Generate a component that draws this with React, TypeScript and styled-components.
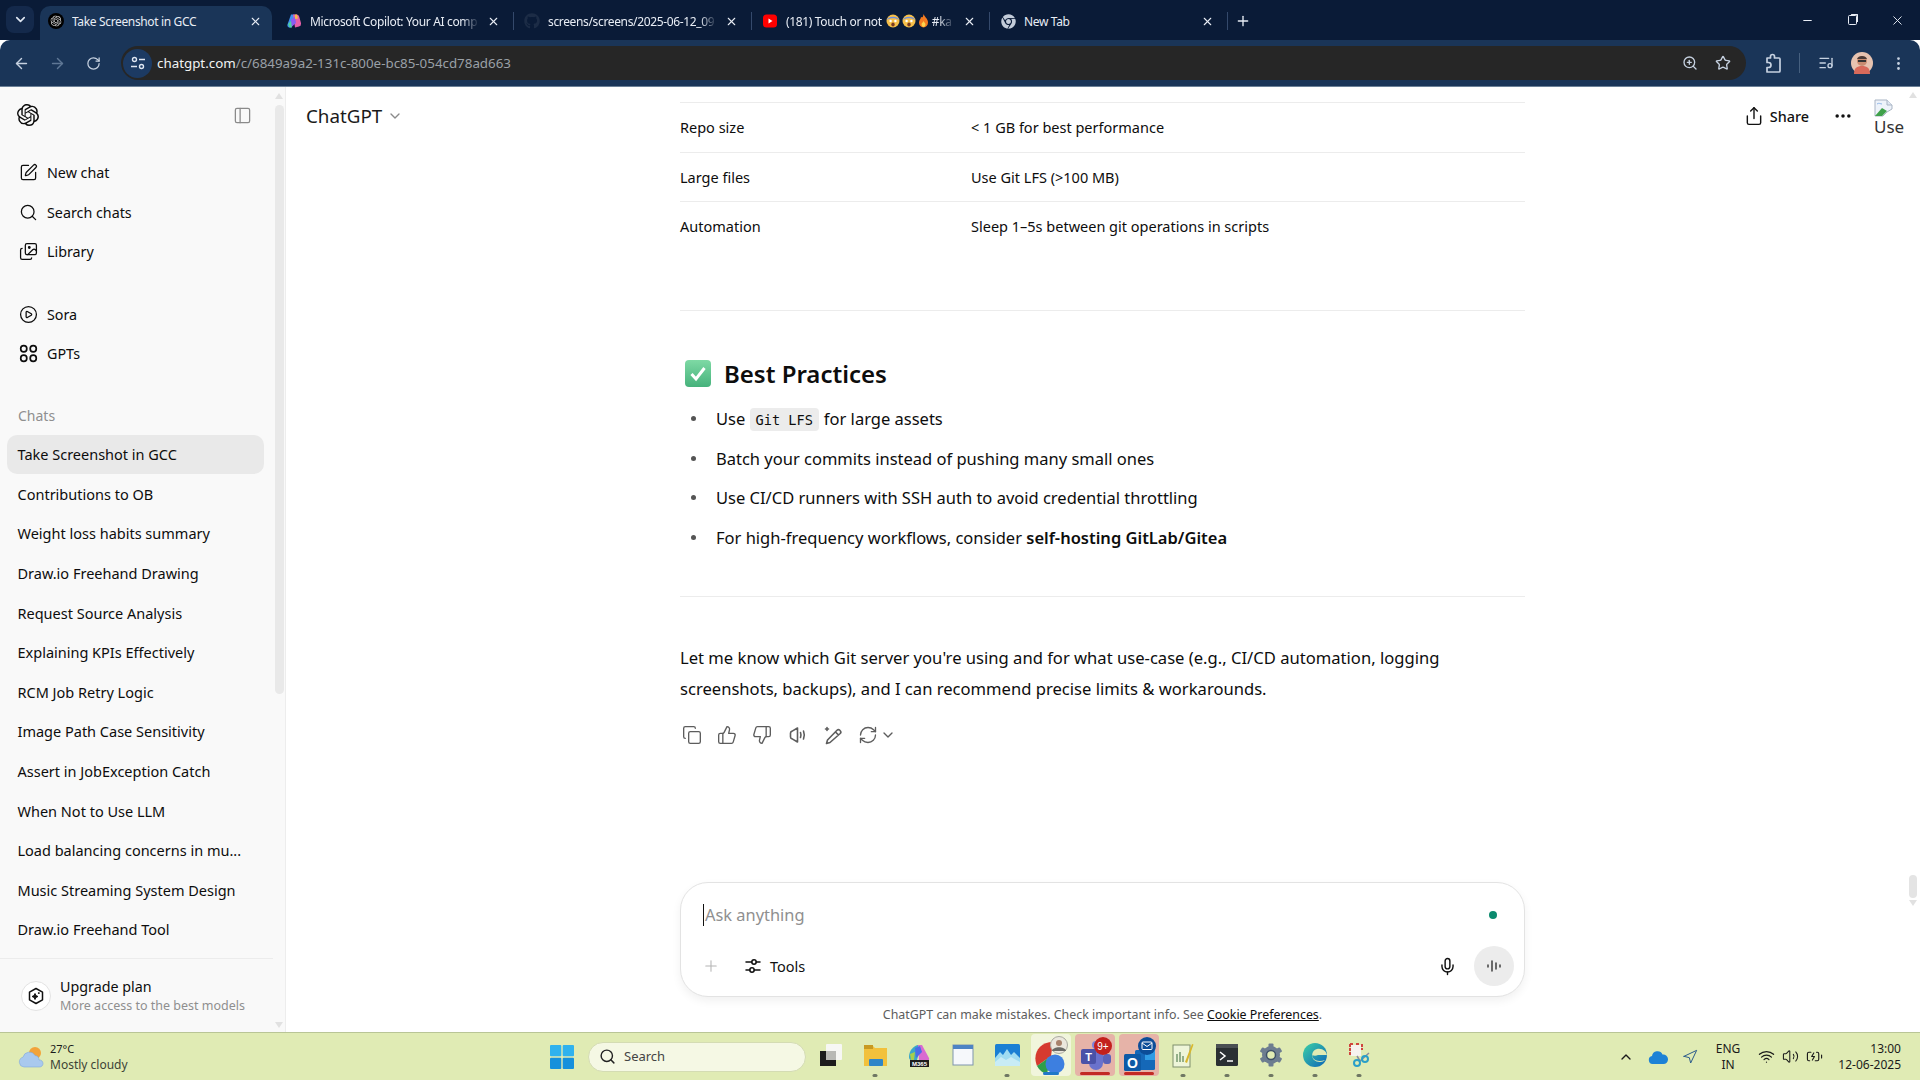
import React from "react";
import styled, { createGlobalStyle } from "styled-components";
import {
  SquarePen, Search, Images, CirclePlay, PanelLeft, Copy, ThumbsUp, ThumbsDown, RefreshCw, ChevronDown, Plus,
  Mic, Share, MoreHorizontal, ArrowLeft, ArrowRight, RotateCw, ZoomIn, Star, ListMusic, MoreVertical,
  Minus, X, ChevronUp, Wifi, Volume2, Navigation, BatteryCharging,
} from "lucide-react";
import { SiOpenai } from "react-icons/si";
import { FaGithub, FaChrome } from "react-icons/fa";

const SANS = `"Noto Sans", "Open Sans", sans-serif`;

const Global = createGlobalStyle`
  html, body { margin: 0; padding: 0; width: 1920px; height: 1080px; overflow: hidden; background: #fff; }
  * { box-sizing: border-box; }
  body { font-family: ${SANS}; color: #0d0d0d; }
`;

const Screen = styled.div`
  width: 1920px; height: 1080px; display: grid; grid-template-rows: 40px 47px 945px 48px; overflow: hidden;
`;

/* ---------- browser chrome ---------- */
const TabStrip = styled.div`
  display: flex; align-items: flex-end; background: #0a1b37; color: #e8edf5;
`;
const TabSearch = styled.div`
  width: 28px; height: 27px; margin: 0 6px 7px 6px; background: #14294b; border-radius: 8px;
  display: flex; align-items: center; justify-content: center; color: #dfe6f2;
`;
const Tab = styled.div<{ $active?: boolean }>`
  width: 232px; height: 34px; display: flex; align-items: center; gap: 8px; padding: 0 10px 4px 8px;
  border-radius: 10px 10px 0 0; background: ${(p) => (p.$active ? "#1a3558" : "transparent")};
  font-size: 12px; white-space: nowrap;
`;
const Fav = styled.span`
  width: 16px; height: 16px; flex: none; display: flex; align-items: center; justify-content: center;
`;
const TabTitle = styled.span`
  flex: 1; min-width: 0; overflow: hidden; display: flex; align-items: center; letter-spacing: -0.35px;
`;
const FadeTitle = styled(TabTitle)`
  -webkit-mask-image: linear-gradient(90deg, #000 90%, transparent);
  mask-image: linear-gradient(90deg, #000 90%, transparent);
`;
const TabEmoji = styled.span`
  display: flex; align-items: center; gap: 2px; margin: 0 3px 0 4px; flex: none;
`;
const TabClose = styled(X)`
  flex: none; width: 13px; height: 13px; stroke-width: 2;
`;
const TabGap = styled.span<{ $line?: boolean }>`
  width: 6px; height: 34px; padding-bottom: 4px; display: flex; justify-content: center; align-items: center;
  &::after { content: ""; width: 1px; height: 18px; background: ${(p) => (p.$line ? "#34496b" : "transparent")}; }
`;
const NewTab = styled.div`
  width: 26px; height: 34px; padding-bottom: 4px; display: flex; align-items: center; justify-content: center;
`;
const WinControls = styled.div`
  margin-left: auto; display: flex; height: 40px; align-self: flex-start;
`;
const WinBtn = styled.div`
  width: 45px; height: 40px; display: flex; align-items: center; justify-content: center; color: #e8edf5;
`;
const RestoreIcon = styled.span`
  width: 9px; height: 10px; border: 1px solid #e8edf5; border-radius: 1.5px; box-shadow: 2px -2px 0 -1px #e8edf5;
`;
const Toolbar = styled.div`
  display: flex; align-items: center; padding-left: 3px; background: #1a3558; border-bottom: 1px solid #6b8097;
  border-radius: 10px 10px 0 0;
  color: #c6d1e0;
`;
const ToolBtn = styled.div<{ $dim?: boolean }>`
  width: 36px; height: 34px; flex: none; display: flex; align-items: center; justify-content: center;
  color: ${(p) => (p.$dim ? "#5f7795" : "#c6d1e0")};
`;
const Omnibox = styled.div`
  width: 1625px; height: 34px; margin-left: 10px; margin-right: 9px; background: #262626; border-radius: 17px;
  display: flex; align-items: center; flex: none; padding-right: 7px;
`;
const SiteBadge = styled.div`
  width: 29px; height: 29px; margin-left: 2px; border-radius: 50%; background: #1c3a63;
  display: flex; align-items: center; justify-content: center; color: #dfe6f2;
`;
const Url = styled.div`
  margin-left: 5px; flex: 1; font-size: 13.35px; color: #9aa0a6; white-space: nowrap;
  & b { font-weight: 400; color: #f1f3f4; }
`;
const PillIcon = styled.div`
  width: 33px; display: flex; justify-content: center; color: #c6d1e0;
`;
const ToolSep = styled.span`
  width: 17px; flex: none; display: flex; justify-content: center;
  &::after { content: ""; width: 1px; height: 20px; background: #46607f; }
`;

/* ---------- body ---------- */
const Body = styled.div`
  display: flex; min-height: 0; background: #fff;
`;
const Sidebar = styled.aside`
  width: 286px; flex: none; display: flex; background: #f9f9f9; border-right: 1px solid #ededed;
`;
const SideMain = styled.div`
  width: 273px; flex: none; display: flex; flex-direction: column; min-height: 0;
`;
const SideHead = styled.div`
  height: 56px; flex: none; display: flex; align-items: center; justify-content: space-between; padding: 0 21px 0 17px;
`;
const NavGroup = styled.div<{ $top: number }>`
  margin-top: ${(p) => p.$top}px; flex: none;
`;
const NavItem = styled.div`
  height: 39.5px; display: flex; align-items: center; gap: 9px; padding-left: 19px; font-size: 14.3px; color: #0d0d0d;
  & svg { width: 19px; height: 19px; flex: none; stroke-width: 1.6; }
`;
const SectionLabel = styled.div`
  height: 40px; margin-top: 21px; padding: 1px 0 0 18px; flex: none; display: flex; align-items: center; font-size: 14px; color: #8f8f8f;
`;
const ChatList = styled.div`
  flex: 1; min-height: 0; overflow: hidden; width: 257px; margin-left: 7px;
`;
const ChatRow = styled.div<{ $active?: boolean }>`
  height: 39.6px; display: flex; align-items: center; padding-left: 10.5px; font-size: 14.5px; white-space: nowrap;
  border-radius: 10px; background: ${(p) => (p.$active ? "#e9e9e9" : "transparent")};
`;
const UpgradeBox = styled.div`
  height: 74px; flex: none; display: flex; align-items: center; gap: 9px; padding-left: 21px; border-top: 1px solid #ececec;
`;
const UpgradeIcon = styled.div`
  width: 30px; height: 30px; border-radius: 50%; border: 1px solid #e3e3e3; flex: none;
  display: flex; align-items: center; justify-content: center; background: #fff;
`;
const UpgradeText = styled.div`
  display: flex; flex-direction: column; gap: 1px; white-space: nowrap;
  & strong { font-weight: 400; font-size: 14.3px; line-height: 19px; }
  & span { font-size: 12.5px; line-height: 17px; color: #8f8f8f; }
`;
const SideScroll = styled.div`
  flex: 1; display: flex; flex-direction: column; align-items: center; padding: 6px 0 4px;
`;
const ArrowUp = styled.span`
  width: 0; height: 0; border: 4.5px solid transparent; border-top: 0; border-bottom: 6px solid #e1e1e1; flex: none;
`;
const ArrowDown = styled.span`
  width: 0; height: 0; border: 4.5px solid transparent; border-bottom: 0; border-top: 6px solid #e1e1e1; flex: none;
`;
const SideThumb = styled.span`
  width: 9px; height: 589px; margin-top: 6px; border-radius: 5px; background: #e9e9e9; flex: none;
`;
const ScrollFill = styled.span`
  flex: 1;
`;

const Main = styled.main`
  flex: 1; display: grid; grid-template-columns: 394px 845px 1fr; min-width: 0;
`;
const LeftCol = styled.div`
  padding-left: 20px;
`;
const ModelPicker = styled.div`
  height: 58px; display: flex; align-items: center; gap: 5px; font-size: 18.8px; color: #1a1a1a;
  & svg { color: #8a8a8a; }
`;
const Thread = styled.div`
  display: flex; flex-direction: column; padding-top: 15px; min-height: 0;
`;
const TableRow = styled.div`
  height: 49.5px; display: flex; align-items: center; font-size: 14.5px; border-top: 1px solid #ececec; flex: none;
`;
const KeyCell = styled.span`
  width: 291px; flex: none;
`;
const Rule = styled.hr<{ $top: number }>`
  border: 0; height: 1px; background: #ececec; margin: ${(p) => p.$top}px 0 0; flex: none;
`;
const Heading = styled.h3`
  margin: 47px 0 0 5px; height: 32px; display: flex; align-items: center; gap: 13px; font-size: 24px; font-weight: 600; flex: none;
`;
const Bullets = styled.ul`
  list-style: none; margin: 9px 0 0; padding: 0; flex: none;
`;
const Bullet = styled.li`
  height: 39.7px; display: flex; align-items: center; white-space: pre; font-size: 16.5px; padding-left: 36px; position: relative;
  &::before { content: ""; position: absolute; left: 11px; top: 17.5px; width: 5px; height: 5px; border-radius: 50%; background: #555; }
  & b { font-weight: 600; }
`;
const Code = styled.code`
  font-family: "DejaVu Sans Mono", "Liberation Mono", monospace; font-size: 13.6px; background: #ececec; border-radius: 4px;
  padding: 3px 6px 2px; margin: 2px 5px 0 0; line-height: 18px;
`;
const Para = styled.p`
  margin: 45px 0 0; font-size: 16.6px; line-height: 31px; flex: none;
`;
const Actions = styled.div`
  margin: 15px 0 0 -6px; height: 32px; display: flex; align-items: center; color: #5d5d5d; flex: none;
`;
const ActionBtn = styled.span`
  width: 35.3px; height: 32px; display: flex; align-items: center; justify-content: center; flex: none;
  & svg { width: 20px; height: 20px; stroke-width: 1.6; }
`;
const RegenChevron = styled(ChevronDown)`
  width: 16px; height: 16px; margin-left: -6px; stroke-width: 2;
`;
const Composer = styled.div`
  margin-top: auto; height: 115px; flex: none; border: 1px solid #e3e3e3; border-radius: 28px; background: #fff;
  box-shadow: 0 4px 10px rgba(0, 0, 0, 0.06); display: flex; flex-direction: column;
`;
const InputLine = styled.div`
  height: 63px; display: flex; align-items: center; justify-content: space-between; padding: 0 27px 0 22px;
`;
const Placeholder = styled.div`
  border-left: 1px solid #111; height: 22px; display: flex; align-items: center; font-size: 16.4px; color: #8f8f8f; padding-left: 1px;
`;
const Dot = styled.span`
  width: 8px; height: 8px; border-radius: 50%; background: #0b8a6e;
`;
const ComposerBar = styled.div`
  height: 40px; display: flex; align-items: center; padding: 0 10px 0 21px; color: #111;
`;
const PlusIcon = styled(Plus)`
  color: #b4b4b4; width: 18px; height: 18px; stroke-width: 1.4;
`;
const ToolsBtn = styled.div`
  margin-left: 24px; display: flex; align-items: center; gap: 8px; font-size: 14.5px;
`;
const MicIcon = styled(Mic)`
  margin-left: auto; margin-right: 17px; width: 19px; height: 19px; stroke-width: 1.8;
`;
const VoiceBtn = styled.div`
  width: 40px; height: 40px; border-radius: 50%; background: #ececec; display: flex; align-items: center; justify-content: center;
`;
const Disclaimer = styled.div`
  height: 35px; flex: none; display: flex; align-items: center; justify-content: center; font-size: 12.4px; color: #5d5d5d; white-space: pre;
  & u { color: #0d0d0d; }
`;
const RightCol = styled.div`
  display: flex; min-width: 0;
`;
const HeaderActions = styled.div`
  flex: 1; height: 58px; display: flex; align-items: center; justify-content: flex-end; color: #111;
`;
const ShareBtn = styled.div`
  display: flex; align-items: center; gap: 6px; font-size: 14.4px; font-weight: 500; margin-right: 24px;
`;
const Dots = styled(MoreHorizontal)`
  width: 20px; height: 20px; margin-right: 21px; stroke-width: 2.2;
`;
const BrokenAvatar = styled.div`
  width: 31px; margin-top: 4px; display: flex; flex-direction: column; font-size: 17px; line-height: 20px; color: #333;
`;
const AvatarAlt = styled.span`
  white-space: nowrap;
`;
const PageScroll = styled.div`
  width: 15px; flex: none; display: flex; flex-direction: column; align-items: center; padding: 5px 0 126px;
`;
const PageThumb = styled.span`
  width: 8px; height: 23px; border-radius: 4px; background: #e4e4e4; margin-bottom: 2px; flex: none;
`;

/* ---------- taskbar ---------- */
const Taskbar = styled.footer`
  display: grid; grid-template-columns: 550px auto 1fr; background: #e0ebb4; border-top: 1px solid #b9c596;
  align-items: center; color: #1b1b1b;
`;
const Weather = styled.div`
  display: flex; align-items: center; gap: 6px; padding-left: 18px;
`;
const WeatherText = styled.div`
  display: flex; flex-direction: column; font-size: 11px; line-height: 16px; white-space: nowrap;
  & span { font-size: 12px; color: #3d4436; }
`;
const CenterGroup = styled.div`
  display: flex; align-items: center;
`;
const StartBtn = styled.div`
  width: 24px; height: 24px; margin-right: 14px; flex: none;
`;
const SearchPill = styled.div`
  width: 218px; height: 30px; margin-right: 3px; border-radius: 15px; background: #f5f8e4; border: 1px solid #d4dcb3;
  display: flex; align-items: center; gap: 8px; padding: 0 0 1px 10px; font-size: 13px; color: #444; flex: none;
`;
const AppCell = styled.div`
  width: 44px; height: 47px; flex: none; display: flex; align-items: flex-start; justify-content: center; padding-top: 1px;
`;
const AppBox = styled.div<{ $tone?: "light" | "alert" }>`
  width: 40px; height: 42px; position: relative; display: flex; align-items: center; justify-content: center; border-radius: 4px;
  background: ${(p) => (p.$tone === "light" ? "#f1f5dc" : p.$tone === "alert" ? "#e6b3a8" : "transparent")};
`;
const Indicator = styled.span<{ $kind: "dot" | "blue" | "red" }>`
  position: absolute; bottom: ${(p) => (p.$kind === "dot" ? "-1px" : "1px")}; left: 50%; transform: translateX(-50%);
  height: 3px; border-radius: 2px;
  width: ${(p) => (p.$kind === "dot" ? "5px" : p.$kind === "blue" ? "16px" : "30px")};
  background: ${(p) => (p.$kind === "dot" ? "#6f7763" : p.$kind === "blue" ? "#1f78c8" : "#c22a24")};
`;
const Tray = styled.div`
  display: flex; align-items: center; justify-content: flex-end; padding-right: 19px; color: #1b1b1b;
`;
const TrayIcon = styled.div<{ $w: number }>`
  width: ${(p) => p.$w}px; display: flex; justify-content: center; flex: none;
`;
const Lang = styled.div`
  width: 44px; margin-right: 4px; text-align: center; font-size: 12px; line-height: 16px; flex: none;
`;
const Clock = styled.div`
  width: 75px; text-align: right; font-size: 12px; line-height: 16px; white-space: nowrap; flex: none;
`;

/* ---------- drawings ---------- */
const TabLogo = () => (
  <svg width="16" height="16" viewBox="0 0 16 16"><circle cx="8" cy="8" r="8" fill="#000" /><g transform="translate(2.5 2.5)"><SiOpenai size={11} color="#ddd" /></g></svg>
);
const CopilotFav = () => (
  <svg width="16" height="16" viewBox="0 0 16 16">
    <path d="M5 1.5h4L7 8 5 14.5H3.5C1.8 14.5 1 13 1.5 11.5z" fill="#3f8ff0" />
    <path d="M7 1.5h3.5c1.6 0 2.4 1 2.8 2.4L15 10c.3 1.5-.6 3-2 3.5L9 14.5 8 8z" fill="#e65fa8" />
    <path d="M5 6.5 9 4l1 6-5 4.5z" fill="#8a5cf0" />
    <path d="M2 11l3-3 1 6.5H3.500z" fill="#4fd0a0" />
    <path d="M9 1.500h2l1 4-3 .5z" fill="#f7b84b" />
  </svg>
);
const YtFav = () => (
  <svg width="16" height="16" viewBox="0 0 16 16"><rect x="1" y="1.5" width="14" height="13" rx="3.5" fill="#f00" /><path d="M6.5 5.5v5l4-2.5z" fill="#fff" /></svg>
);
const Face = () => (
  <svg width="14" height="14" viewBox="0 0 14 14"><circle cx="7" cy="7" r="6.5" fill="#f7c04a" /><path d="M.8 6C2 1.5 12 1.5 13.2 6 10 3.5 4 3.5.8 6z" fill="#6d8fe0" /><circle cx="4.6" cy="7" r="1.2" fill="#fff" /><circle cx="9.4" cy="7" r="1.2" fill="#fff" /><ellipse cx="7" cy="10.5" rx="1.7" ry="2" fill="#7a3a20" /></svg>
);
const Flame = () => (
  <svg width="11" height="14" viewBox="0 0 11 14"><path d="M5.5 0c1 3 4.5 4.5 4.5 8.5a4.500 5 0 0 1-9 0C1 6 3 5 3 3c1 .5 2 1 2.500-3z" fill="#f47b20" /><path d="M5.500 7c.6 1.500 2 2 2 3.600a2 2.400 0 0 1-4 0C3.500 9 5 8.500 5.500 7z" fill="#fcd34d" /></svg>
);
const SiteControls = () => (
  <svg width="16" height="16" viewBox="0 0 16 16" fill="none" stroke="currentColor" strokeWidth="1.400"><circle cx="4.500" cy="4.500" r="2" /><path d="M9 4.500h6M1 11.500h6" /><circle cx="11.500" cy="11.500" r="2" /></svg>
);
const ExtensionIcon = () => (
  <svg width="18" height="20" viewBox="0 0 18 20" fill="none" stroke="currentColor" strokeWidth="1.700" strokeLinejoin="round"><path d="M3 5h3.500V3.500a2 2 0 0 1 4 0V5H15a1 1 0 0 1 1 1v12a1 1 0 0 1-1 1H3v-4.500h1.500a2.500 2.500 0 0 0 0-5H3z" /></svg>
);
const Avatar = () => (
  <svg width="22" height="22" viewBox="0 0 22 22"><circle cx="11" cy="11" r="11" fill="#e7c3b0" /><path d="M3 22c0-6 3-8 8-8s8 2 8 8z" fill="#d96a5a" /><circle cx="11" cy="9" r="5" fill="#c98c70" /><path d="M6 7c1-4 9-4 10 0H6z" fill="#4a3a36" /><rect x="7" y="8" width="8" height="2" fill="#333" /></svg>
);
const GptsIcon = () => (
  <svg viewBox="0 0 18 18" fill="none" stroke="currentColor"><circle cx="4.500" cy="4.500" r="2.900" /><circle cx="13.500" cy="4.500" r="2.900" /><circle cx="4.500" cy="13.500" r="2.900" /><circle cx="13.500" cy="13.500" r="2.900" /></svg>
);
const SpeakerIcon = () => (
  <svg viewBox="0 0 20 20" fill="none" stroke="currentColor" strokeLinecap="round" strokeLinejoin="round"><path d="M2.500 8c0-1 .7-1.700 1.700-1.900L9.500 3v14l-5.300-3.100C3.200 13.700 2.500 13 2.500 12z" /><path d="M12.500 7.500c.6 1.600.6 3.400 0 5M15.500 6c1 2.500 1 5.500 0 8" /></svg>
);
const EditSpark = () => (
  <svg viewBox="0 0 20 20" fill="none" stroke="currentColor" strokeLinecap="round" strokeLinejoin="round"><path d="M7 17.500l-3.500 1 1-3.500L14 5.300a2 2 0 0 1 2.800 0l.4.400a2 2 0 0 1 0 2.800zM12.500 7l2.900 2.900" /><path d="M4 2.500v3M2.500 4h3" /></svg>
);
const ToolsIcon = () => (
  <svg width="18" height="18" viewBox="0 0 18 18" fill="none" stroke="currentColor" strokeWidth="1.500" strokeLinecap="round"><circle cx="10" cy="5" r="2.200" /><circle cx="8" cy="13" r="2.200" /><path d="M2 5h5.800M12.200 5H16M2 13h3.800M10.200 13H16" /></svg>
);
const VoiceIcon = () => (
  <svg width="18" height="18" viewBox="0 0 18 18" stroke="#333" strokeWidth="1.400" strokeLinecap="round"><path d="M3 8v2M7 4v10M11 6v6M15 8v2" /></svg>
);
const HexSpark = () => (
  <svg width="18" height="18" viewBox="0 0 18 18" fill="none" stroke="#111" strokeWidth="1.500" strokeLinejoin="round"><path d="M9 1.500l6.500 3.700v7.600L9 16.500l-6.500-3.700V5.200z" /><path d="M8 6.500l.9 2.100 2.100.9-2.100.9L8 12.500l-.9-2.100-2.100-.9 2.100-.9zM11.800 5.200v1.800M10.900 6.100h1.800" strokeWidth="1" fill="#111" /></svg>
);
const BrokenImg = () => (
  <svg width="20" height="18" viewBox="0 0 20 18"><path d="M1 1h12l5 5v4l-5 3-4 4H1z" fill="#eef3fa" stroke="#a9b4c4" /><path d="M13 1v5h5" fill="#dfe7f2" stroke="#a9b4c4" /><path d="M1 17l7-8 5 3-5 5z" fill="#3fa14a" /><path d="M3 5c2-1.500 3.500 0 5 0" stroke="#8fb6e8" fill="none" /></svg>
);
const CheckEmoji = () => (
  <svg width="26" height="27" viewBox="0 0 26 27">
    <defs><linearGradient id="cg" x1="0" y1="0" x2="0" y2="1"><stop offset="0" stopColor="#7ed9a4" /><stop offset="1" stopColor="#46b27c" /></linearGradient></defs>
    <rect x="0" y="0" width="26" height="27" rx="4" fill="url(#cg)" />
    <path d="M6.500 14l4.500 5 8.500-11" fill="none" stroke="#fff" strokeWidth="3" />
  </svg>
);
const WeatherIcon = () => (
  <svg width="26" height="22" viewBox="0 0 26 22">
    <circle cx="17" cy="7" r="6" fill="#f2a33a" />
    <path d="M6 21a5 5 0 0 1-1-9.800A6.500 6.500 0 0 1 17 9.500a4.500 4.500 0 0 1 4 4.500 3.500 3.500 0 0 1 4 3.500c0 2-1.500 3.500-3.500 3.500z" fill="#a9c9ee" stroke="#7fa8dc" strokeWidth=".6" />
  </svg>
);
const WinLogo = () => (
  <svg width="24" height="24" viewBox="0 0 24 24" style={{ display: "block" }}>
    <rect width="11.300" height="11.300" rx="1" fill="#2fb2ee" /><rect x="12.700" width="11.300" height="11.300" rx="1" fill="#2fb2ee" /><rect y="12.700" width="11.300" height="11.300" rx="1" fill="#1590dc" /><rect x="12.700" y="12.700" width="11.300" height="11.300" rx="1" fill="#1590dc" />
  </svg>
);
const TaskView = () => (
  <svg width="24" height="24" viewBox="0 0 24 24"><rect x="1" y="8" width="16" height="15" fill="#1c1c1c" /><rect x="7" y="1" width="16" height="16" rx="1" fill="#f7f7f4" /><rect x="7" y="8" width="10" height="9" fill="#b9b9b5" /></svg>
);
const Explorer = () => (
  <svg width="25" height="24" viewBox="0 0 25 24"><path d="M1 2h8l3 3h12v18H1z" fill="#f2c13c" /><rect x="1" y="2" width="9" height="4" fill="#c89a22" /><rect x="6" y="16" width="14" height="7" rx="1" fill="#2f86c8" /></svg>
);
const M365 = () => (
  <svg width="26" height="26" viewBox="0 0 26 26">
    <path d="M3 15c0-6 4-11 9-12l3 1-4 14H5c-1.500 0-2-1.500-2-3z" fill="#3aa7c9" /><path d="M12 3h4l7 13c.6 1.500-.4 3-2 3h-8z" fill="#d96bd0" /><path d="M9 6l5-2 2 6-6 6z" fill="#4b6be8" /><path d="M4 12l5-2-1 8H5z" fill="#a7cf4c" />
    <rect x="4" y="18" width="19" height="7" fill="#1c1c1c" /><text x="13.500" y="24" fontSize="6" fontWeight="700" fill="#fff" textAnchor="middle" fontFamily="Liberation Sans, sans-serif">M365</text>
  </svg>
);
const WinApp = () => (
  <svg width="22" height="24" viewBox="0 0 22 24"><rect x="1" y="2" width="20" height="20" fill="#f6f8fb" stroke="#7e95ad" /><rect x="1" y="2" width="20" height="4" fill="#4d83c4" /></svg>
);
const WaveApp = () => (
  <svg width="25" height="22" viewBox="0 0 25 22"><rect width="25" height="22" rx="1.500" fill="#1a7fd4" /><path d="M0 14l5-6 3 3 4-6 4 6 3-3 6 6v8H0z" fill="#9fdcf2" /><path d="M0 18l6-5 5 3 5-3 9 5v4H0z" fill="#c8ecf6" /></svg>
);
const ChromeAvatar = () => (
  <svg width="36" height="38" viewBox="0 0 36 38">
    <path d="M4 30C-1 18 6 6 20 6l-2 14z" fill="#d63a2f" /><path d="M4 30c2 4 6 7 10 8l4-18z" fill="#2f9e4b" />
    <circle cx="22" cy="28" r="9.500" fill="#3d7fe0" /><circle cx="26" cy="9" r="8.500" fill="#ebe7dd" stroke="#a9a9a0" /><circle cx="26" cy="7" r="3" fill="#a8826c" /><path d="M19 15c1-5 13-5 14 0z" fill="#6a6a66" />
  </svg>
);
const Teams = () => (
  <svg width="36" height="36" viewBox="0 0 36 36">
    <path d="M12 12h14v14a7 7 0 0 1-14 0z" fill="#6a72cc" /><circle cx="29" cy="13" r="3" fill="#5a62b8" /><rect x="26" y="17" width="8" height="10" rx="3" fill="#5a62b8" /><circle cx="19" cy="8" r="4" fill="#7b83dc" />
    <rect x="4" y="12" width="15" height="15" rx="2" fill="#4a52a8" /><text x="11.500" y="24" fontSize="11" fontWeight="700" fill="#fff" textAnchor="middle" fontFamily="Liberation Sans, sans-serif">T</text>
    <circle cx="26" cy="9" r="9" fill="#c3211d" /><text x="26" y="13" fontSize="10" fill="#fff" textAnchor="middle" fontFamily="Liberation Sans, sans-serif">9+</text>
  </svg>
);
const Outlook = () => (
  <svg width="36" height="36" viewBox="0 0 36 36">
    <rect x="14" y="13" width="20" height="20" rx="1.500" fill="#1568b8" /><rect x="24" y="13" width="10" height="10" fill="#2f9be4" />
    <rect x="3" y="17" width="17" height="17" rx="1.500" fill="#0e5aa6" /><text x="11.500" y="31" fontSize="14" fontWeight="700" fill="#fff" textAnchor="middle" fontFamily="Liberation Sans, sans-serif">O</text>
    <circle cx="26" cy="9" r="9" fill="#0c4d98" /><rect x="21" y="5" width="10" height="7.500" rx="1" fill="none" stroke="#fff" /><path d="M21 6l5 3.500L31 6" fill="none" stroke="#fff" />
  </svg>
);
const NoteApp = () => (
  <svg width="22" height="26" viewBox="0 0 22 26"><rect x="1" y="3" width="17" height="22" fill="#eef5d9" stroke="#7f8f6c" /><path d="M5 12v8M8 10v10M11 14v6" stroke="#3a6a3a" /><path d="M13 20l7-18 1.500.6L15 21z" fill="#d9b72c" /></svg>
);
const Term = () => (
  <svg width="22" height="22" viewBox="0 0 22 22"><rect width="22" height="22" rx="1.500" fill="#2a2f33" /><rect width="22" height="4" fill="#4a4f53" /><path d="M4 8l5 4-5 4" fill="none" stroke="#fff" strokeWidth="1.500" /><path d="M11 17h6" stroke="#fff" strokeWidth="1.500" /></svg>
);
const Gear = () => (
  <svg width="24" height="24" viewBox="0 0 24 24">
    <g fill="#6d7d90"><circle cx="12" cy="12" r="9" /><rect x="9.500" y="0.500" width="5" height="23" rx="1" /><rect x="9.500" y="0.500" width="5" height="23" rx="1" transform="rotate(60 12 12)" /><rect x="9.500" y="0.500" width="5" height="23" rx="1" transform="rotate(120 12 12)" /></g>
    <circle cx="12" cy="12" r="4.500" fill="#e0ebb4" stroke="#3e5168" strokeWidth="1.500" />
  </svg>
);
const Edge = () => (
  <svg width="24" height="24" viewBox="0 0 24 24">
    <defs><linearGradient id="eg" x1="0" y1="0" x2="1" y2="1"><stop offset="0" stopColor="#3dd1a6" /><stop offset="1" stopColor="#0c63b8" /></linearGradient></defs>
    <circle cx="12" cy="12" r="12" fill="url(#eg)" /><path d="M24 13c0-5-5-8-10-7-4 1-6 5-4 9 2 3 7 4 12 2-1 1-3 2-5 2-5 0-8-3-8-7 2 1 4 1 6 0h9z" fill="#e0ebb4" />
  </svg>
);
const Snip = () => (
  <svg width="24" height="26" viewBox="0 0 24 26"><path d="M3 2h4M9 2h4M3 2v12M15 2v6" stroke="#d0453e" strokeWidth="2" fill="none" strokeDasharray="3 1" /><rect x="4" y="3" width="10" height="11" fill="#f6f2ee" /><path d="M10 14l3 5 9-8" stroke="#8a8a9a" strokeWidth="1.500" fill="none" /><circle cx="10" cy="21" r="3" fill="none" stroke="#2a9fc8" strokeWidth="2" /><circle cx="18" cy="17" r="3" fill="none" stroke="#2a9fc8" strokeWidth="2" /></svg>
);
const Cloud = () => (
  <svg width="20" height="14" viewBox="0 0 20 14"><path d="M4.500 14A4 4 0 0 1 4 6.100 5.500 5.500 0 0 1 14.500 4.500 4.800 4.800 0 0 1 20 9.500C20 12 18 14 15.500 14z" fill="#1d82d6" /></svg>
);

const CHATS = [
  "Take Screenshot in GCC", "Contributions to OB", "Weight loss habits summary", "Draw.io Freehand Drawing",
  "Request Source Analysis", "Explaining KPIs Effectively", "RCM Job Retry Logic", "Image Path Case Sensitivity",
  "Assert in JobException Catch", "When Not to Use LLM", "Load balancing concerns in mu...", "Music Streaming System Design",
  "Draw.io Freehand Tool",
];

const APPS: { node: React.ReactNode; tone?: "light" | "alert"; mark?: "dot" | "blue" | "red" }[] = [
  { node: <TaskView /> },
  { node: <Explorer />, mark: "dot" },
  { node: <M365 /> },
  { node: <WinApp /> },
  { node: <WaveApp />, mark: "dot" },
  { node: <ChromeAvatar />, tone: "light", mark: "blue" },
  { node: <Teams />, tone: "alert", mark: "red" },
  { node: <Outlook />, tone: "alert", mark: "red" },
  { node: <NoteApp />, mark: "dot" },
  { node: <Term />, mark: "dot" },
  { node: <Gear />, mark: "dot" },
  { node: <Edge />, mark: "dot" },
  { node: <Snip />, mark: "dot" },
];

export default function App() {
  return (
    <Screen>
      <Global />
      <TabStrip>
        <TabSearch><ChevronDown size={15} strokeWidth={2.6} /></TabSearch>
        <Tab $active>
          <Fav><TabLogo /></Fav>
          <TabTitle>Take Screenshot in GCC</TabTitle>
          <TabClose />
        </Tab>
        <TabGap />
        <Tab>
          <Fav><CopilotFav /></Fav>
          <FadeTitle>Microsoft Copilot: Your AI comp</FadeTitle>
          <TabClose />
        </Tab>
        <TabGap $line />
        <Tab>
          <Fav><FaGithub size={16} color="#1c2c46" /></Fav>
          <FadeTitle>screens/screens/2025-06-12_09</FadeTitle>
          <TabClose />
        </Tab>
        <TabGap $line />
        <Tab>
          <Fav><YtFav /></Fav>
          <FadeTitle>(181) Touch or not<TabEmoji><Face /><Face /><Flame /></TabEmoji>#ka</FadeTitle>
          <TabClose />
        </Tab>
        <TabGap $line />
        <Tab>
          <Fav><FaChrome size={15} color="#c3ccd9" /></Fav>
          <TabTitle>New Tab</TabTitle>
          <TabClose />
        </Tab>
        <TabGap $line />
        <NewTab><Plus size={16} strokeWidth={2} /></NewTab>
        <WinControls>
          <WinBtn><Minus size={13} /></WinBtn>
          <WinBtn><RestoreIcon /></WinBtn>
          <WinBtn><X size={15} strokeWidth={1.5} /></WinBtn>
        </WinControls>
      </TabStrip>

      <Toolbar>
        <ToolBtn><ArrowLeft size={17} /></ToolBtn>
        <ToolBtn $dim><ArrowRight size={17} /></ToolBtn>
        <ToolBtn><RotateCw size={15} /></ToolBtn>
        <Omnibox>
          <SiteBadge><SiteControls /></SiteBadge>
          <Url><b>chatgpt.com</b>/c/6849a9a2-131c-800e-bc85-054cd78ad663</Url>
          <PillIcon><ZoomIn size={16} /></PillIcon>
          <PillIcon><Star size={16} /></PillIcon>
        </Omnibox>
        <ToolBtn><ExtensionIcon /></ToolBtn>
        <ToolSep />
        <ToolBtn><ListMusic size={16} /></ToolBtn>
        <ToolBtn><Avatar /></ToolBtn>
        <ToolBtn><MoreVertical size={17} /></ToolBtn>
      </Toolbar>

      <Body>
        <Sidebar>
          <SideMain>
            <SideHead>
              <SiOpenai size={22} color="#0d0d0d" />
              <PanelLeft size={19} color="#8a8a8a" strokeWidth={1.6} />
            </SideHead>
            <NavGroup $top={10}>
              <NavItem><SquarePen />New chat</NavItem>
              <NavItem><Search />Search chats</NavItem>
              <NavItem><Images />Library</NavItem>
            </NavGroup>
            <NavGroup $top={23}>
              <NavItem><CirclePlay />Sora</NavItem>
              <NavItem><GptsIcon />GPTs</NavItem>
            </NavGroup>
            <SectionLabel>Chats</SectionLabel>
            <ChatList>
              {CHATS.map((c, i) => (
                <ChatRow key={c} $active={i === 0}>{c}</ChatRow>
              ))}
            </ChatList>
            <UpgradeBox>
              <UpgradeIcon><HexSpark /></UpgradeIcon>
              <UpgradeText>
                <strong>Upgrade plan</strong>
                <span>More access to the best models</span>
              </UpgradeText>
            </UpgradeBox>
          </SideMain>
          <SideScroll>
            <ArrowUp />
            <SideThumb />
            <ScrollFill />
            <ArrowDown />
          </SideScroll>
        </Sidebar>

        <Main>
          <LeftCol>
            <ModelPicker>ChatGPT<ChevronDown size={16} /></ModelPicker>
          </LeftCol>

          <Thread>
            <TableRow><KeyCell>Repo size</KeyCell>&lt; 1 GB for best performance</TableRow>
            <TableRow><KeyCell>Large files</KeyCell>Use Git LFS (&gt;100 MB)</TableRow>
            <TableRow><KeyCell>Automation</KeyCell>Sleep 1–5s between git operations in scripts</TableRow>
            <Rule $top={59} />
            <Heading><CheckEmoji />Best Practices</Heading>
            <Bullets>
              <Bullet>Use <Code>Git LFS</Code>for large assets</Bullet>
              <Bullet>Batch your commits instead of pushing many small ones</Bullet>
              <Bullet>Use CI/CD runners with SSH auth to avoid credential throttling</Bullet>
              <Bullet>For high-frequency workflows, consider <b>self-hosting GitLab/Gitea</b></Bullet>
            </Bullets>
            <Rule $top={39} />
            <Para>
              Let me know which Git server you're using and for what use-case (e.g., CI/CD automation, logging<br />
              screenshots, backups), and I can recommend precise limits &amp; workarounds.
            </Para>
            <Actions>
              <ActionBtn><Copy /></ActionBtn>
              <ActionBtn><ThumbsUp /></ActionBtn>
              <ActionBtn><ThumbsDown /></ActionBtn>
              <ActionBtn><SpeakerIcon /></ActionBtn>
              <ActionBtn><EditSpark /></ActionBtn>
              <ActionBtn><RefreshCw /></ActionBtn>
              <RegenChevron />
            </Actions>
            <Composer>
              <InputLine>
                <Placeholder>Ask anything</Placeholder>
                <Dot />
              </InputLine>
              <ComposerBar>
                <PlusIcon />
                <ToolsBtn><ToolsIcon />Tools</ToolsBtn>
                <MicIcon />
                <VoiceBtn><VoiceIcon /></VoiceBtn>
              </ComposerBar>
            </Composer>
            <Disclaimer>ChatGPT can make mistakes. Check important info. See <u>Cookie Preferences</u>.</Disclaimer>
          </Thread>

          <RightCol>
            <HeaderActions>
              <ShareBtn><Share size={20} strokeWidth={1.7} />Share</ShareBtn>
              <Dots />
              <BrokenAvatar><BrokenImg /><AvatarAlt>Use</AvatarAlt></BrokenAvatar>
            </HeaderActions>
            <PageScroll>
              <ArrowUp />
              <ScrollFill />
              <PageThumb />
              <ArrowDown />
            </PageScroll>
          </RightCol>
        </Main>
      </Body>

      <Taskbar>
        <Weather>
          <WeatherIcon />
          <WeatherText>27°C<span>Mostly cloudy</span></WeatherText>
        </Weather>
        <CenterGroup>
          <StartBtn><WinLogo /></StartBtn>
          <SearchPill><Search size={17} color="#222" />Search</SearchPill>
          {APPS.map((a, i) => (
            <AppCell key={i}>
              <AppBox $tone={a.tone}>
                {a.node}
                {a.mark && <Indicator $kind={a.mark} />}
              </AppBox>
            </AppCell>
          ))}
        </CenterGroup>
        <Tray>
          <TrayIcon $w={32}><ChevronUp size={16} strokeWidth={2} /></TrayIcon>
          <TrayIcon $w={32}><Cloud /></TrayIcon>
          <TrayIcon $w={32}><Navigation size={16} color="#2a5a8a" strokeWidth={1.5} /></TrayIcon>
          <Lang>ENG<br />IN</Lang>
          <TrayIcon $w={24}><Wifi size={17} strokeWidth={1.7} /></TrayIcon>
          <TrayIcon $w={24}><Volume2 size={17} strokeWidth={1.5} /></TrayIcon>
          <TrayIcon $w={24}><BatteryCharging size={17} strokeWidth={1.6} /></TrayIcon>
          <Clock>13:00<br />12-06-2025</Clock>
        </Tray>
      </Taskbar>
    </Screen>
  );
}
